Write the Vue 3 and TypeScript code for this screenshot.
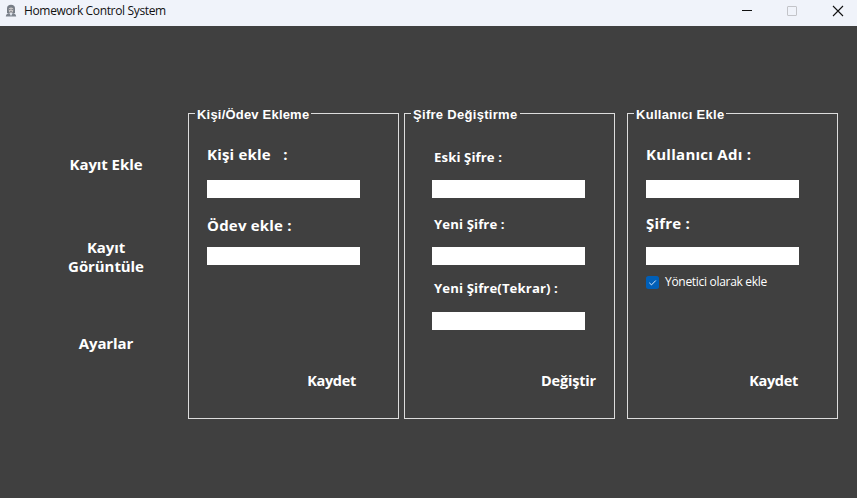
<script setup lang="ts">
import { ref } from 'vue'

interface Field {
  id: string
  label: string
  type: string
}

interface Panel {
  id: string
  title: string
  fields: Field[]
  action: string
  adminOption?: boolean
}

const navItems: { id: string; label: string }[] = [
  { id: 'add', label: 'Kayıt Ekle' },
  { id: 'view', label: 'Kayıt Görüntüle' },
  { id: 'settings', label: 'Ayarlar' },
]

const panels: Panel[] = [
  {
    id: 'entry',
    title: 'Kişi/Ödev Ekleme',
    fields: [
      { id: 'person', label: 'Kişi ekle   :', type: 'text' },
      { id: 'homework', label: 'Ödev ekle :', type: 'text' },
    ],
    action: 'Kaydet',
  },
  {
    id: 'password',
    title: 'Şifre Değiştirme',
    fields: [
      { id: 'old', label: 'Eski Şifre :', type: 'password' },
      { id: 'new', label: 'Yeni Şifre :', type: 'password' },
      { id: 'repeat', label: 'Yeni Şifre(Tekrar) :', type: 'password' },
    ],
    action: 'Değiştir',
  },
  {
    id: 'user',
    title: 'Kullanıcı Ekle',
    fields: [
      { id: 'username', label: 'Kullanıcı Adı :', type: 'text' },
      { id: 'userpass', label: 'Şifre :', type: 'password' },
    ],
    action: 'Kaydet',
    adminOption: true,
  },
]

const values = ref<Record<string, string>>({})
const isAdmin = ref(true)
</script>

<template>
  <div class="window">
    <header class="titlebar">
      <svg class="app-icon" viewBox="0 0 12 14">
        <path d="M2 9V4.500C2 2 3.500.8 6 .8s4 1.200 4 3.700V9z" fill="#777d86" />
        <path d="M3.800 4.200Q6 2.600 8.200 4.200V7Q7.800 9 6 9.300 4.200 9 3.800 7z" fill="#c9c6c6" />
        <path d="M4 5.500h1.500M6.500 5.500H8M5 7.700h2" stroke="#70747d" stroke-width=".8" />
        <path d="M.8 12.500Q1 9.700 4 9l2 1.300L8 9q3 .7 3.200 3.500z" fill="#7d838d" />
        <path d="M4.500 9.500 6 12l1.500-2.500z" fill="#dfe5ee" />
      </svg>
      <span class="title">Homework Control System</span>
      <div class="controls">
        <svg viewBox="0 0 12 12"><path d="M1 5.500h10" stroke="#111" /></svg>
        <svg viewBox="0 0 12 12"><rect x="1.500" y="1.500" width="9" height="9" rx=".5" fill="none" stroke="#c3c4c9" /></svg>
        <svg viewBox="0 0 12 12"><path d="M1 1l10 10M11 1L1 11" stroke="#111" stroke-width="1.100" /></svg>
      </div>
    </header>

    <main class="body">
      <nav class="sidebar">
        <button v-for="item in navItems" :key="item.id" type="button" :class="['nav', item.id]">
          {{ item.label }}
        </button>
      </nav>

      <section v-for="panel in panels" :key="panel.id" :class="['panel', panel.id]">
        <h2 class="legend">{{ panel.title }}</h2>
        <div v-for="field in panel.fields" :key="field.id" :class="['field', field.id]">
          <label :for="field.id"><span>{{ field.label }}</span></label>
          <input :id="field.id" v-model="values[field.id]" :type="field.type" />
        </div>
        <label v-if="panel.adminOption" class="check">
          <input v-model="isAdmin" type="checkbox" />
          <svg viewBox="0 0 13 13">
            <rect width="13" height="13" rx="2.500" fill="#005fb8" />
            <path v-if="isAdmin" d="M3.300 6.800l2.200 2.100 4.300-4.400" fill="none" stroke="#d8eaff" />
          </svg>
          <span>Yönetici olarak ekle</span>
        </label>
        <button type="button" class="action">{{ panel.action }}</button>
      </section>
    </main>
  </div>
</template>

<style>
body {
  margin: 0;
  background: #404040;
}
</style>

<style scoped>
.window {
  width: 857px;
  height: 498px;
  overflow: hidden;
  background: #404040;
  color: #fff;
  font-family: "Open Sans", "Noto Sans", sans-serif;
}

.titlebar {
  display: flex;
  align-items: center;
  box-sizing: border-box;
  height: 26px;
  padding: 0 13px 5px 5px;
  background: #f0f3fa;
  color: #111;
}

.app-icon {
  width: 12px;
  height: 14px;
}

.title {
  margin-left: 7px;
  font-size: 12px;
  line-height: 20px;
  letter-spacing: -0.35px;
}

.controls {
  display: flex;
  gap: 33px;
  margin-left: auto;
}

.controls svg {
  width: 12px;
  height: 12px;
}

.controls svg:last-child {
  margin-left: 1px;
}

.body {
  display: flex;
  align-items: flex-start;
  padding-top: 87px;
}

button {
  padding: 0;
  border: 0;
  background: none;
  color: inherit;
  font: 700 15px/20px "Open Sans", "Noto Sans", sans-serif;
  cursor: pointer;
}

.sidebar {
  display: flex;
  flex-direction: column;
  align-items: center;
  width: 164px;
  padding: 41px 0 0 24px;
}

.nav {
  width: 90px;
  letter-spacing: -0.08px;
}

.nav.view {
  margin-top: 64px;
  line-height: 19px;
}

.nav.settings {
  margin-top: 57px;
}

.panel {
  display: flex;
  flex-direction: column;
  align-items: flex-start;
  box-sizing: border-box;
  width: 211px;
  height: 306px;
  padding-left: 18px;
  border: 1px solid #dcdcdc;
}

.panel.password {
  margin-left: 5px;
  padding-left: 27px;
}

.panel.user {
  margin-left: 12px;
}

.legend {
  height: 16px;
  margin: -7px 0 21px -12px;
  padding: 0 2px;
  background: #404040;
  font: 700 13px/16px "Liberation Sans", Arial, sans-serif;
  letter-spacing: 0.2px;
  white-space: nowrap;
}

.password .legend {
  margin-left: -21px;
  letter-spacing: 0.3px;
}

.user .legend {
  letter-spacing: 0.28px;
}

.field {
  display: flex;
  flex-direction: column;
}

.field label {
  height: 20px;
  font-size: 15px;
  font-weight: 700;
  line-height: 20px;
  letter-spacing: 0.2px;
  white-space: pre;
}

.field.username label {
  letter-spacing: 0.27px;
}

.field input {
  box-sizing: border-box;
  width: 153px;
  height: 18px;
  margin: 16px 0 0;
  padding: 0 3px;
  border: 0;
  border-radius: 0;
  outline: 0;
  background: #fff;
}

.field.homework {
  margin-top: 17px;
}

.field.homework input {
  margin-top: 12px;
}

.password .field label {
  padding-left: 2px;
  font-size: 13.2px;
  letter-spacing: 0.1px;
}

.field.old {
  margin-top: 3px;
}

.field.old input {
  margin-top: 13px;
}

.field.new {
  margin-top: 16px;
}

.field.new input {
  margin-top: 13px;
}

.field.repeat {
  margin-top: 13px;
}

.field.repeat input {
  margin-top: 14px;
}

.field.userpass {
  margin-top: 15px;
}

.field.userpass input {
  margin-top: 14px;
}

.check {
  display: flex;
  align-items: center;
  height: 20px;
  margin-top: 7px;
  font-size: 12px;
  line-height: 20px;
  letter-spacing: -0.3px;
  white-space: nowrap;
}

.check input {
  appearance: none;
  width: 0;
  height: 0;
  margin: 0;
}

.check svg {
  width: 13px;
  height: 13px;
  margin-right: 6px;
}

.action {
  align-self: flex-end;
  margin: auto 42px 27px 0;
  font-size: 14.5px;
  letter-spacing: -0.3px;
}

.password .action {
  margin-right: 18px;
  letter-spacing: -0.18px;
}

.user .action {
  margin-right: 39px;
}
</style>
